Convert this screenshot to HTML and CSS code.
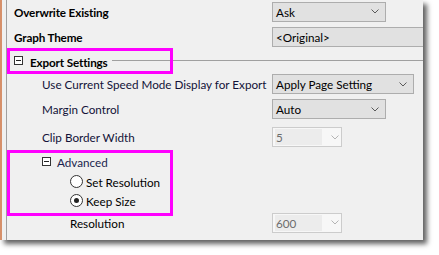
FILE: index.html
```html
<!DOCTYPE html>
<html>
<head>
<meta charset="utf-8">
<link rel="stylesheet" href="styles.css">
</head>
<body>
<div class="frame">
  <div class="panel">
    <div class="row h24">
      <div class="label bold l1">Overwrite Existing</div>
      <div class="value"><div class="dd w114"><span>Ask</span><svg class="chev" width="8" height="5" viewBox="0 0 8 5"><polyline points="0.5,0.5 4,4 7.5,0.5"/></svg></div></div>
    </div>
    <div class="row h28">
      <div class="label bold l1">Graph Theme</div>
      <div class="value"><div class="dd wfull"><span>&lt;Original&gt;</span></div></div>
    </div>
    <div class="row h22 header">
      <span class="tog"></span><span class="bold htext">Export Settings</span><span class="hline"></span>
    </div>
    <div class="row h22">
      <div class="label navy l2">Use Current Speed Mode Display for Export</div>
      <div class="value"><div class="dd w142"><span>Apply Page Setting</span><svg class="chev" width="8" height="5" viewBox="0 0 8 5"><polyline points="0.5,0.5 4,4 7.5,0.5"/></svg></div></div>
    </div>
    <div class="row h28">
      <div class="label navy l2">Margin Control</div>
      <div class="value"><div class="dd w114"><span>Auto</span><svg class="chev" width="8" height="5" viewBox="0 0 8 5"><polyline points="0.5,0.5 4,4 7.5,0.5"/></svg></div></div>
    </div>
    <div class="row h28">
      <div class="label navy l2">Clip Border Width</div>
      <div class="value"><div class="dd dis"><span class="field">5</span><svg class="chev" width="8" height="5" viewBox="0 0 8 5"><polyline points="0.5,0.5 4,4 7.5,0.5"/></svg></div></div>
    </div>
    <div class="row h21 sub">
      <span class="tog"></span><span class="navy2">Advanced</span>
    </div>
    <div class="row h19 radio-row">
      <span class="radio"></span><span>Set Resolution</span>
    </div>
    <div class="row h19 radio-row">
      <span class="radio on"></span><span>Keep Size</span>
    </div>
    <div class="row h25">
      <div class="label l3">Resolution</div>
      <div class="value"><div class="dd dis"><span class="field">600</span><svg class="chev" width="8" height="5" viewBox="0 0 8 5"><polyline points="0.5,0.5 4,4 7.5,0.5"/></svg></div></div>
    </div>
  </div>
  <div class="mark m1"></div>
  <div class="mark m2"></div>
</div>
</body>
</html>
```
FILE: styles.css
```css
html, body {
  margin: 0;
  padding: 0;
  background: #ffffff;
}
body {
  width: 439px;
  height: 255px;
  overflow: hidden;
  font-family: "Lato", "Noto Sans", sans-serif;
  font-size: 11.7px;
  line-height: 16px;
  color: #000;
}
.frame {
  position: relative;
  width: 421px;
  height: 240px;
  background: #f0f0f0;
  border-left: 2px solid #d6906a;
  box-shadow: 4px 4px 5px 0 rgba(0, 0, 0, 0.62);
}
.panel {
  margin-left: 4px;
  height: 240px;
  border-left: 1px solid #a0a0a0;
  display: flex;
  flex-direction: column;
  overflow: hidden;
}
.row {
  display: grid;
  grid-template-columns: 265px 1fr;
  align-items: center;
}
.h19 { height: 19px; }
.h21 { height: 21px; }
.h22 { height: 22px; }
.h24 { height: 23px; }
.h25 { height: 25px; }
.h28 { height: 28px; }
.bold { font-weight: bold; letter-spacing: -0.15px; }
.navy { color: #121238; }
.navy2 { color: #1a1f4e; }
.label { white-space: nowrap; }
.l1 { padding-left: 7px; }
.l2 { padding-left: 35px; }
.l3 { padding-left: 63px; }
.value {
  overflow: hidden;
  height: 20px;
}
.dd {
  box-sizing: border-box;
  height: 20px;
  border: 1px solid #adadad;
  background: #e1e1e1;
  display: flex;
  align-items: center;
  padding: 0 6px 0 3px;
}
.dd span { flex: 1; white-space: nowrap; }
.w114 { width: 114px; }
.w142 { width: 142px; }
.wfull { width: calc(100% + 4px); }
.chev { flex: none; }
.chev polyline {
  fill: none;
  stroke: #5a5a5a;
  stroke-width: 1;
}
.dd.dis {
  width: 70px;
  background: #f7f7f7;
  border-color: #cccccc;
  padding: 0 6px 0 2px;
}
.dd.dis .field {
  flex: none;
  width: 47px;
  height: 16px;
  line-height: 16px;
  background: #ececec;
  color: #6d6d6d;
  padding-left: 1px;
  box-sizing: border-box;
  margin-right: 9px;
}
.dd.dis .chev polyline { stroke: #b4b4b4; }
.header {
  display: flex;
  align-items: center;
}
.tog {
  box-sizing: border-box;
  width: 9px;
  height: 9px;
  border: 1px solid #333;
  background: #fff;
  position: relative;
  flex: none;
}
.tog::after {
  content: "";
  position: absolute;
  left: 1px;
  right: 1px;
  top: 3px;
  height: 1px;
  background: #222;
}
.header .tog { margin-left: 7px; margin-top: -3px; }
.htext { margin-left: 7px; }
.hline {
  flex: 1;
  height: 1px;
  background: #a0a0a0;
  margin-left: 4px;
  margin-top: -3px;
}
.sub {
  display: flex;
  align-items: center;
}
.sub .tog { margin-left: 35px; margin-right: 6px; }
.radio-row {
  display: flex;
  align-items: center;
}
.radio {
  box-sizing: border-box;
  width: 13px;
  height: 13px;
  border: 1px solid #333;
  border-radius: 50%;
  background: #fff;
  margin-left: 63px;
  margin-right: 3px;
  position: relative;
  flex: none;
}
.radio.on::after {
  content: "";
  position: absolute;
  left: 3px;
  top: 3px;
  width: 5px;
  height: 5px;
  border-radius: 50%;
  background: #222;
}
.mark {
  position: absolute;
  box-sizing: border-box;
  border: 3px solid #ff00ff;
  left: 5px;
  width: 166px;
}
.m1 { top: 48px; height: 26px; }
.m2 { top: 150px; height: 66px; }
```
